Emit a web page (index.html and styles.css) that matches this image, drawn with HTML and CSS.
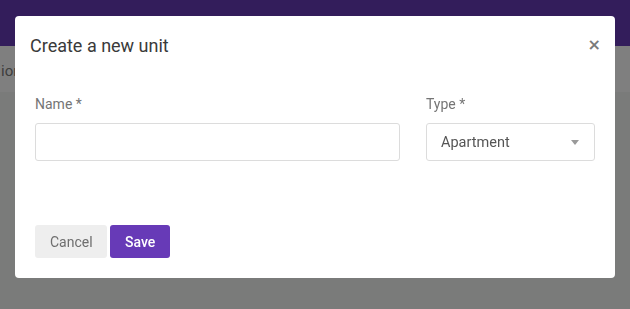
FILE: index.html
```html
<!DOCTYPE html>
<html lang="en">
<head>
  <meta charset="UTF-8">
  <title>Units</title>
  <link rel="stylesheet" href="styles.css">
</head>
<body>
  <!-- App behind the dialog -->
  <header class="app-bar"></header>
  <nav class="tool-bar">
    <span class="tab">ion</span>
  </nav>
  <main class="page"></main>

  <div class="backdrop"></div>

  <!-- Create unit dialog -->
  <div class="modal">
    <div class="modal-header">
      <h2>Create a new unit</h2>
      <button class="close-btn" aria-label="Close">&times;</button>
    </div>

    <div class="modal-body">
      <div class="field">
        <label for="unitName">Name *</label>
        <input type="text" id="unitName">
      </div>
      <div class="field">
        <label for="unitType">Type *</label>
        <div class="select">
          <span>Apartment</span>
          <span class="caret"></span>
        </div>
      </div>
    </div>

    <div class="modal-footer">
      <button class="btn btn-cancel">Cancel</button>
      <button class="btn btn-save">Save</button>
    </div>
  </div>
</body>
</html>
```

FILE: styles.css
```css
body {
  margin: 0;
  overflow: hidden;
  height: 309px;
  background: #f5f6f5;
  font-family: Roboto, "Liberation Sans", sans-serif;
}

.app-bar {
  height: 46px;
  background: #673ab7;
}

.tool-bar {
  height: 46px;
  padding-top: 4px;
  box-sizing: border-box;
  background: #fff;
  display: flex;
  align-items: center;
  overflow: hidden;
}
.tool-bar .tab {
  margin-left: 1px;
  font-size: 15px;
  color: #7c7c7c;
}

.backdrop {
  position: fixed;
  top: 0;
  left: 0;
  width: 100%;
  height: 100%;
  background: rgba(0, 0, 0, 0.5);
}

/* Dialog */
.modal {
  position: absolute;
  top: 16px;
  left: 15px;
  width: 600px;
  height: 262px;
  background: #fff;
  border-radius: 4px;
  display: flex;
  flex-direction: column;
}

.modal-header {
  display: flex;
  align-items: center;
  justify-content: space-between;
  padding: 18px 14px 0 15px;
}
.modal-header h2 {
  margin: 0;
  font-size: 18px;
  line-height: 24px;
  font-weight: 400;
  color: #3a3a3a;
}
.close-btn {
  border: none;
  background: none;
  padding: 0;
  margin-top: -2px;
  font-family: "DejaVu Sans", sans-serif;
  font-size: 16px;
  font-weight: bold;
  line-height: 20px;
  color: #7a7a7a;
}

.modal-body {
  display: grid;
  grid-template-columns: 1fr 169px;
  gap: 26px;
  padding: 36px 20px 0 20px;
}
.field label {
  display: block;
  font-size: 14px;
  line-height: 20px;
  color: #757575;
  margin-bottom: 9px;
}
.field input,
.select {
  box-sizing: border-box;
  width: 100%;
  height: 38px;
  border: 1px solid #dcdcdc;
  border-radius: 3px;
  background: #fff;
}
.select {
  display: flex;
  align-items: center;
  justify-content: space-between;
  padding: 0 15px 0 14px;
  font-size: 14.5px;
  color: #555;
}
.caret {
  width: 0;
  height: 0;
  border-left: 4px solid transparent;
  border-right: 4px solid transparent;
  border-top: 5px solid #9a9a9a;
}

.modal-footer {
  margin-top: auto;
  display: flex;
  gap: 3px;
  padding: 0 20px 20px 20px;
}
.btn {
  height: 33px;
  border: none;
  border-radius: 3px;
  padding: 0 15px;
  font-family: Roboto, "Liberation Sans", sans-serif;
  font-size: 14px;
}
.btn-cancel {
  width: 72px;
  background: #eee;
  color: #6e6e6e;
}
.btn-save {
  width: 60px;
  background: #673ab7;
  color: #fff;
  font-weight: 500;
}
```
